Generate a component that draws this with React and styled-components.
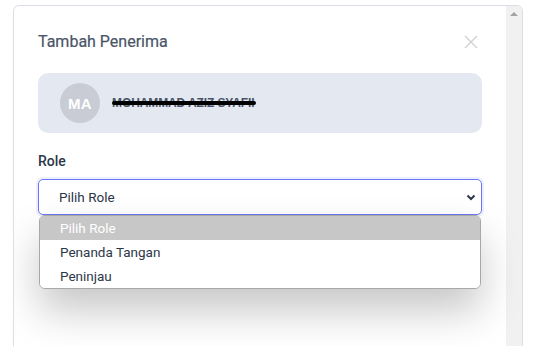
import React from "react";
import styled, { createGlobalStyle } from "styled-components";

const Global = createGlobalStyle`
  html, body { margin: 0; padding: 0; background: #ffffff; overflow: hidden; }
  body { font-family: Roboto, "Liberation Sans", Arial, sans-serif; }
  * { box-sizing: border-box; }
`;

const Page = styled.div`
  width: 539px;
  height: 346px;
  padding: 5px 16px 0 13px;
  overflow: hidden;
`;

const Modal = styled.div`
  display: flex;
  width: 510px;
  height: 380px;
  border: 1px solid #dcdde8;
  border-radius: 6px 6px 0 0;
  background: #ffffff;
  overflow: hidden;
`;

const Body = styled.div`
  flex: 1;
  padding: 24px 24px 0 24px;
  position: relative;
`;

const Scrollbar = styled.div`
  width: 16px;
  background: #f1f1f1;
  display: flex;
  justify-content: center;
  padding-top: 6px;
`;

const ArrowUp = styled.div`
  width: 0;
  height: 0;
  border-left: 4px solid transparent;
  border-right: 4px solid transparent;
  border-bottom: 4px solid #a3a3a3;
`;

const Header = styled.div`
  display: flex;
  align-items: center;
  justify-content: space-between;
  height: 24px;
  margin-bottom: 19px;
`;

const Title = styled.h2`
  margin: 0;
  font-size: 16px;
  font-weight: 400;
  line-height: 24px;
  color: #4a5568;
  -webkit-text-stroke: 0.2px #4a5568;
`;

const CloseButton = styled.button`
  width: 24px;
  height: 24px;
  padding: 0;
  border: 0;
  background: none;
  display: flex;
  align-items: center;
  justify-content: center;
  margin-right: -1px;
`;

const UserCard = styled.div`
  display: flex;
  align-items: center;
  gap: 12px;
  height: 60px;
  padding-left: 22px;
  background: #e4e8f1;
  border-radius: 10px;
`;

const Avatar = styled.div`
  width: 40px;
  height: 40px;
  border-radius: 50%;
  background: #c9ccd4;
  color: #ffffff;
  font-family: "Liberation Sans", Arial, sans-serif;
  font-weight: 700;
  font-size: 15px;
  display: flex;
  align-items: center;
  justify-content: center;
  letter-spacing: 0.3px;
`;

const Name = styled.span`
  position: relative;
  font-family: "Liberation Sans", Arial, sans-serif;
  font-size: 12px;
  font-weight: 700;
  color: #4a5568;
  letter-spacing: -0.1px;
  &::after {
    content: "";
    position: absolute;
    left: 0;
    right: -2px;
    top: 50%;
    height: 4px;
    margin-top: -2px;
    border-radius: 2px;
    background: #000000;
  }
`;

const Label = styled.div`
  margin-top: 18px;
  margin-bottom: 8px;
  font-size: 14px;
  font-weight: 500;
  line-height: 20px;
  color: #2d3748;
`;

const SelectBox = styled.div`
  position: relative;
  height: 36px;
  border: 1px solid #6b77f5;
  border-radius: 5px;
  box-shadow: 0 0 0 2px rgba(107, 119, 245, 0.12);
  display: flex;
  align-items: center;
  justify-content: space-between;
  padding: 0 4px 0 20px;
  font-size: 13.5px;
  color: #2d3748;
`;

const Menu = styled.div`
  position: absolute;
  top: 35px;
  left: 0px;
  right: 0px;
  border: 1px solid #a8a8a8;
  border-radius: 6px;
  background: #ffffff;
  overflow: hidden;
  box-shadow: 0 22px 40px rgba(0, 0, 0, 0.22);
`;

const Option = styled.div`
  height: 24px;
  line-height: 24px;
  padding-left: 20px;
  font-size: 13.5px;
  color: ${(p) => (p.$active ? "#ffffff" : "#2d3748")};
  background: ${(p) => (p.$active ? "#c7c7c7" : "#ffffff")};
`;

export default function App() {
  return (
    <>
      <Global />
      <Page>
        <Modal>
          <Body>
            <Header>
              <Title>Tambah Penerima</Title>
              <CloseButton aria-label="close">
                <svg width="14" height="14" viewBox="0 0 14 14">
                  <path d="M1 1L13 13M13 1L1 13" stroke="#cfd0d4" strokeWidth="1.4" fill="none" />
                </svg>
              </CloseButton>
            </Header>
            <UserCard>
              <Avatar>MA</Avatar>
              <Name>MOHAMMAD AZIZ SYAFII</Name>
            </UserCard>
            <Label>Role</Label>
            <SelectBox>
              <span>Pilih Role</span>
              <svg width="12" height="12" viewBox="0 0 12 12">
                <path d="M2.5 4.5L6 8L9.5 4.5" stroke="#2d3748" strokeWidth="2" fill="none" />
              </svg>
              <Menu>
                <Option $active>Pilih Role</Option>
                <Option>Penanda Tangan</Option>
                <Option>Peninjau</Option>
              </Menu>
            </SelectBox>
          </Body>
          <Scrollbar>
            <ArrowUp />
          </Scrollbar>
        </Modal>
      </Page>
    </>
  );
}
